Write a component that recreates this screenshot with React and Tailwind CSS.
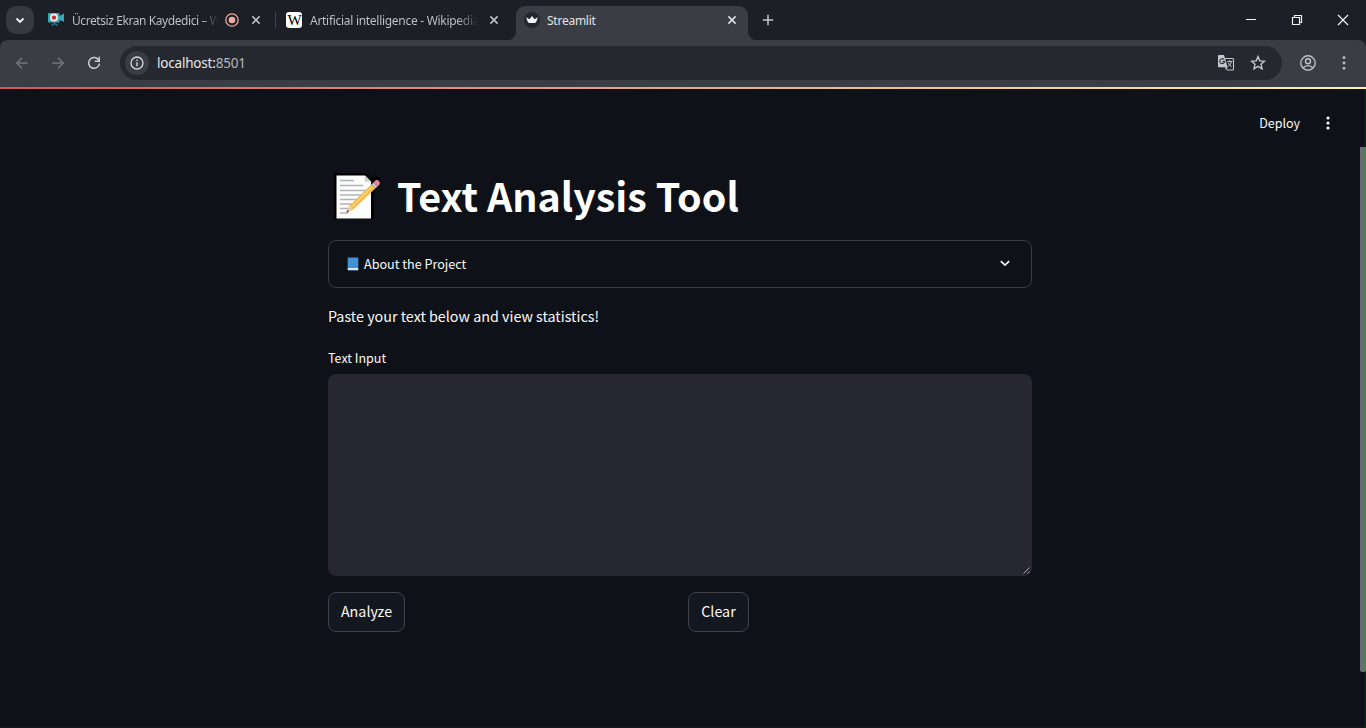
import React from "react";

function CloseIcon({ className }) {
  return (
    <svg width="10" height="10" viewBox="0 0 10 10" className={className}>
      <path d="M1.4 1.4l7.2 7.2M8.6 1.4L1.4 8.6" stroke="currentColor" strokeWidth="1.5" fill="none" />
    </svg>
  );
}

function RecorderIcon() {
  return (
    <svg width="16" height="16" viewBox="0 0 16 16" className="shrink-0">
      <path d="M1 1h9.500a1 1 0 0 1 1 1v2L16 1.600v8.200L11.500 8v2.500H1a1 1 0 0 1-1-1V2a1 1 0 0 1 1-1z" fill="#35a9b5" />
      <path d="M6.500 10v2M3.600 13.400L6.500 11.500l3 1.900" stroke="#278995" strokeWidth="1.200" fill="none" />
      <circle cx="6" cy="5.600" r="4" fill="#f1e9e9" />
      <circle cx="6" cy="5.600" r="2.200" fill="#c32f38" />
    </svg>
  );
}

function RecordingDot() {
  return (
    <svg width="14" height="14" viewBox="0 0 14 14" className="shrink-0 text-[#f0aaa4]">
      <circle cx="7" cy="7" r="6.200" fill="none" stroke="currentColor" strokeWidth="1.300" />
      <circle cx="7" cy="7" r="3.300" fill="currentColor" />
    </svg>
  );
}

function CrownIcon() {
  return (
    <svg width="16" height="16" viewBox="0 0 16 16" className="shrink-0">
      <circle cx="8" cy="8" r="8" fill="#24262f" />
      <path d="M2 5.300l3.500 1.900L8 4l2.500 3.200L14 5.300l-2 5.200c-2.500.7-5.500.7-8 0z" fill="#f4f4f6" />
    </svg>
  );
}

function TabStrip() {
  return (
    <div className="flex h-10 shrink-0 items-center bg-[#1c1f26] font-['Noto_Sans','Open_Sans',sans-serif] text-[12px] leading-4 text-[#c3c6cc]">
      <button className="ml-1.5 flex size-7 items-center justify-center rounded-[10px] bg-[#363940]">
        <svg width="10" height="7" viewBox="0 0 10 7">
          <path d="M1.500 1.500L5 5l3.500-3.500" stroke="#f0f1f3" strokeWidth="1.900" fill="none" />
        </svg>
      </button>
      <div className="ml-[14px] flex w-[227px] items-center">
        <RecorderIcon />
        <span className="ml-2 w-[146px] overflow-hidden whitespace-nowrap bg-linear-to-r from-[#c3c6cc] from-88% to-transparent bg-clip-text pt-0.5 text-transparent tracking-[-0.42px]">
          Ücretsiz Ekran Kaydedici – W
        </span>
        <span className="ml-[7px] flex"><RecordingDot /></span>
        <CloseIcon className="ml-3" />
      </div>
      <div className="h-4 w-px bg-[#41444b]" />
      <div className="ml-[10px] flex w-[230px] items-center">
        <span className="flex size-4 shrink-0 items-center justify-center rounded-[3px] bg-white font-['Liberation_Serif',serif] text-[15px] leading-none tracking-[-1px] text-black">
          W
        </span>
        <span className="ml-2 w-[168px] overflow-hidden whitespace-nowrap bg-linear-to-r from-[#c3c6cc] from-88% to-transparent bg-clip-text pt-0.5 text-transparent tracking-[-0.29px]">
          Artificial intelligence - Wikipedia
        </span>
        <CloseIcon className="ml-[11px]" />
      </div>
      <div className="flex h-10 flex-col justify-end">
        <div className="flex h-[34px] items-end">
          <svg width="8" height="8" viewBox="0 0 8 8" className="-ml-2 shrink-0">
            <path d="M8 0v8H0a8 8 0 0 0 8-8z" fill="#3a3d44" />
          </svg>
          <div className="flex h-[34px] w-[232px] items-center rounded-t-[9px] bg-[#3a3d44] pb-[6px] pl-2 text-[#e2e3e6]">
            <CrownIcon />
            <span className="ml-[7px] w-[180px] pt-0.5 tracking-[-0.25px]">Streamlit</span>
            <CloseIcon />
          </div>
          <svg width="8" height="8" viewBox="0 0 8 8" className="shrink-0">
            <path d="M0 0v8h8a8 8 0 0 1-8-8z" fill="#3a3d44" />
          </svg>
        </div>
      </div>
      <svg width="12" height="12" viewBox="0 0 12 12" className="ml-[6px]">
        <path d="M6 .8v10.400M.8 6h10.400" stroke="#c3c6cc" strokeWidth="1.500" />
      </svg>
      <div className="ml-auto flex items-center gap-[34px] pr-[17px] text-[#f2f2f3]">
        <svg width="12" height="12" viewBox="0 0 12 12">
          <path d="M1 5.500h10" stroke="currentColor" />
        </svg>
        <svg width="12" height="12" viewBox="0 0 12 12" fill="none" stroke="currentColor" strokeWidth="1.200">
          <path d="M1.500 3.500h7v7h-7zM3.500 3.500v-2h7v7h-2" />
        </svg>
        <svg width="12" height="12" viewBox="0 0 12 12">
          <path d="M1 1l10 10M11 1L1 11" stroke="currentColor" strokeWidth="1.200" />
        </svg>
      </div>
    </div>
  );
}

function TranslateIcon() {
  return (
    <svg width="18" height="18" viewBox="0 0 18 18">
      <path d="M8 4.500h7.500a1 1 0 0 1 1 1V15a1 1 0 0 1-1 1H10" fill="none" stroke="#c5c7cb" strokeWidth="1.100" />
      <path d="M2 1h5l3.600 12.300H2a1 1 0 0 1-1-1V2a1 1 0 0 1 1-1z" fill="#c5c7cb" />
      <path d="M8 13.300h2.800L9 16.500z" fill="#c5c7cb" />
      <path d="M7 5.400a2.500 2.500 0 1 0 .7 2.100H5.300" fill="none" stroke="#25282f" strokeWidth="1.100" />
      <path d="M10.300 7.500h5M12.700 6.300v1.200M14.400 7.600c-.5 2.200-1.700 3.700-3.200 4.800M11.200 8.800c.8 1.700 2 3 3.500 4" fill="none" stroke="#c5c7cb" />
    </svg>
  );
}

function Toolbar() {
  return (
    <div className="bg-[#1c1f26]">
      <div className="flex h-[47px] items-center rounded-t-[8px] bg-[#3a3d44] pb-px pl-4">
        <svg width="12" height="12" viewBox="0 0 12 12" className="text-[#74777d]" fill="none" stroke="currentColor" strokeWidth="1.400">
          <path d="M11.700 6H1M6 .8L.8 6 6 11.200" />
        </svg>
        <svg width="12" height="12" viewBox="0 0 12 12" className="ml-6 text-[#74777d]" fill="none" stroke="currentColor" strokeWidth="1.400">
          <path d="M.3 6H11M6 .8L11.200 6 6 11.200" />
        </svg>
        <svg width="14" height="14" viewBox="0 0 14 14" className="ml-[23px] text-[#d0d2d6]">
          <path d="M11.800 4.300A5.400 5.400 0 1 0 12.400 7.700" fill="none" stroke="currentColor" strokeWidth="1.500" />
          <path d="M13 .8v5.100H7.900V4.500h3.700V.8z" fill="currentColor" />
        </svg>
        <div className="ml-[19px] flex h-[34px] w-[1162px] items-center rounded-full bg-[#25282f] pl-[5px] pr-4">
          <span className="flex size-6 items-center justify-center rounded-full bg-[#3a3d44]">
            <svg width="14" height="14" viewBox="0 0 14 14" className="text-[#d6d8dc]">
              <circle cx="7" cy="7" r="6" fill="none" stroke="currentColor" strokeWidth="1.300" />
              <path d="M7 6.300v4M7 3.600v1.500" stroke="currentColor" strokeWidth="1.400" />
            </svg>
          </span>
          <span className="ml-2 font-['Noto_Sans','Open_Sans',sans-serif] text-[13.500px] leading-5 tracking-[-0.2px] text-[#e6e7ea]">
            localhost:<span className="text-[#b3b6bb]">8501</span>
          </span>
          <div className="ml-auto flex items-center gap-[15px]">
            <TranslateIcon />
            <svg width="16" height="16" viewBox="0 0 16 16">
              <path d="M8 1.600l1.850 4.250 4.650.4-3.500 3.050 1.050 4.500L8 11.400l-4.050 2.400 1.050-4.500-3.500-3.050 4.650-.4z" fill="none" stroke="#c5c7cb" strokeWidth="1.400" />
            </svg>
          </div>
        </div>
        <svg width="16" height="16" viewBox="0 0 16 16" className="ml-[18px] text-[#c0c2c6]" fill="none" stroke="currentColor" strokeWidth="1.400">
          <circle cx="8" cy="8" r="7.200" />
          <circle cx="8" cy="6.300" r="2.500" />
          <path d="M3 13c1.300-1.600 3-2.400 5-2.400s3.700.8 5 2.400" />
        </svg>
        <svg width="4" height="14" viewBox="0 0 4 14" className="ml-[26px]" fill="#c0c2c6">
          <circle cx="2" cy="1.700" r="1.400" />
          <circle cx="2" cy="7" r="1.400" />
          <circle cx="2" cy="12.300" r="1.400" />
        </svg>
      </div>
    </div>
  );
}

function MemoIcon() {
  return (
    <svg width="54" height="54" viewBox="0 0 54 54" className="shrink-0">
      <path d="M6 5h31l5 4 5-2 6 5-7 9v30H6z" fill="#000" />
      <path d="M8.500 7.500H37l6 6v37H8.500z" fill="#fdfdfd" />
      <path d="M37 7.500v6h6z" fill="#c9cbcf" />
      <path d="M12 12.500h14M12 17.500h23M12 22.500h26M12 27h24M12 31.500h20M12 36h17M12 40.500h11M12 45h8" stroke="#b1b2b6" strokeWidth="1.500" fill="none" />
      <path d="M18.500 44.500l2.500-6.500 3.800 4z" fill="#e9c6a5" />
      <path d="M18.300 44.800l1.200-3 1.700 1.900z" fill="#55514f" />
      <path d="M21 38l22.500-21.700 4 4L24.800 42z" fill="#f2bd4b" />
      <path d="M22.700 39.700L45 18.200" stroke="#f9d676" strokeWidth="1.500" />
      <path d="M43.500 16.300l2-1.900 4 4-2 1.900z" fill="#c9c8cb" />
      <path d="M45.500 14.400l2-1.900c2-1.600 5.500 1.500 3.900 4l-1.900 1.900z" fill="#e58a94" />
    </svg>
  );
}

function BookIcon() {
  return (
    <svg width="12" height="14" viewBox="0 0 12 14" className="shrink-0">
      <path d="M1 .5h10.300v10.800H.7V.8z" fill="#4191d6" />
      <path d="M.7 11h10.600v2.300H1.500a.9.900 0 0 1-.8-.9z" fill="#dceaf5" />
      <path d="M1 13.400h10.300" stroke="#2d72b4" strokeWidth=".5" />
    </svg>
  );
}

function ActionButton({ children, className }) {
  return (
    <button className={`flex h-10 items-center justify-center rounded-lg border border-[#41434b] bg-[#131720] pb-[3px] text-[14.300px] leading-6 ${className}`}>
      {children}
    </button>
  );
}

export default function App() {
  return (
    <div className="flex h-[728px] w-[1366px] flex-col overflow-hidden bg-[#0e1117]">
      <TabStrip />
      <Toolbar />
      <div className="h-0.5 shrink-0 bg-linear-to-r from-[#d4555a] via-[#e5a98a] to-[#fbf3a8]" />
      <div className="flex flex-1 border-b border-[#0a2010] font-['Noto_Sans_CJK_SC',sans-serif] text-[#fafafa]">
        <div className="flex flex-1 flex-col">
          <header className="flex h-[68px] items-center justify-end pr-[30px]">
            <span className="text-[12.500px] leading-5">Deploy</span>
            <svg width="4" height="14" viewBox="0 0 4 14" className="ml-[26px]" fill="#fafafa">
              <circle cx="2" cy="2" r="1.600" />
              <circle cx="2" cy="7" r="1.600" />
              <circle cx="2" cy="12" r="1.600" />
            </svg>
          </header>
          <main className="ml-[328px] w-[704px]">
            <h1 className="flex h-[83px] items-center pb-[7px] text-[39.400px] font-bold leading-[52px] text-white">
              <MemoIcon />
              <span className="ml-[15px] whitespace-nowrap">Text Analysis Tool</span>
            </h1>
            <section className="flex h-12 items-center rounded-lg border border-[#3a3c44] pl-[18px] pr-[21px]">
              <BookIcon />
              <span className="ml-[5px] text-[12.600px] leading-5">About the Project</span>
              <svg width="10" height="8" viewBox="0 0 10 8" className="ml-auto">
                <path d="M.8 1.200L5 5.200l4.200-4" fill="none" stroke="#fafafa" strokeWidth="1.600" />
              </svg>
            </section>
            <p className="mt-4 text-[14.320px] leading-6">Paste your text below and view statistics!</p>
            <label htmlFor="text-input" className="mt-5 block text-[12.500px] leading-5">Text Input</label>
            <textarea id="text-input" className="mt-[6px] block h-[202px] w-full resize-none rounded-lg bg-[#262730] outline-none" />
            <div className="-mt-[9px] mr-0.5 flex h-[9px] justify-end">
              <svg width="7" height="7" viewBox="0 0 7 7" className="relative">
                <path d="M.5 6.500l6-6M4.500 6.500l2-2" stroke="#b5b6ba" strokeWidth=".9" />
              </svg>
            </div>
            <div className="mt-4 grid grid-cols-2 gap-4">
              <ActionButton className="w-[77px]">Analyze</ActionButton>
              <ActionButton className="w-[61px]">Clear</ActionButton>
            </div>
          </main>
        </div>
        <aside className="w-1.5 border-r border-[#0a2a12] pt-[58px]">
          <div className="-mr-px h-[525px] rounded-b-[2px] border-r-2 border-[#4c8052] bg-[#6a6c74]" />
        </aside>
      </div>
    </div>
  );
}
